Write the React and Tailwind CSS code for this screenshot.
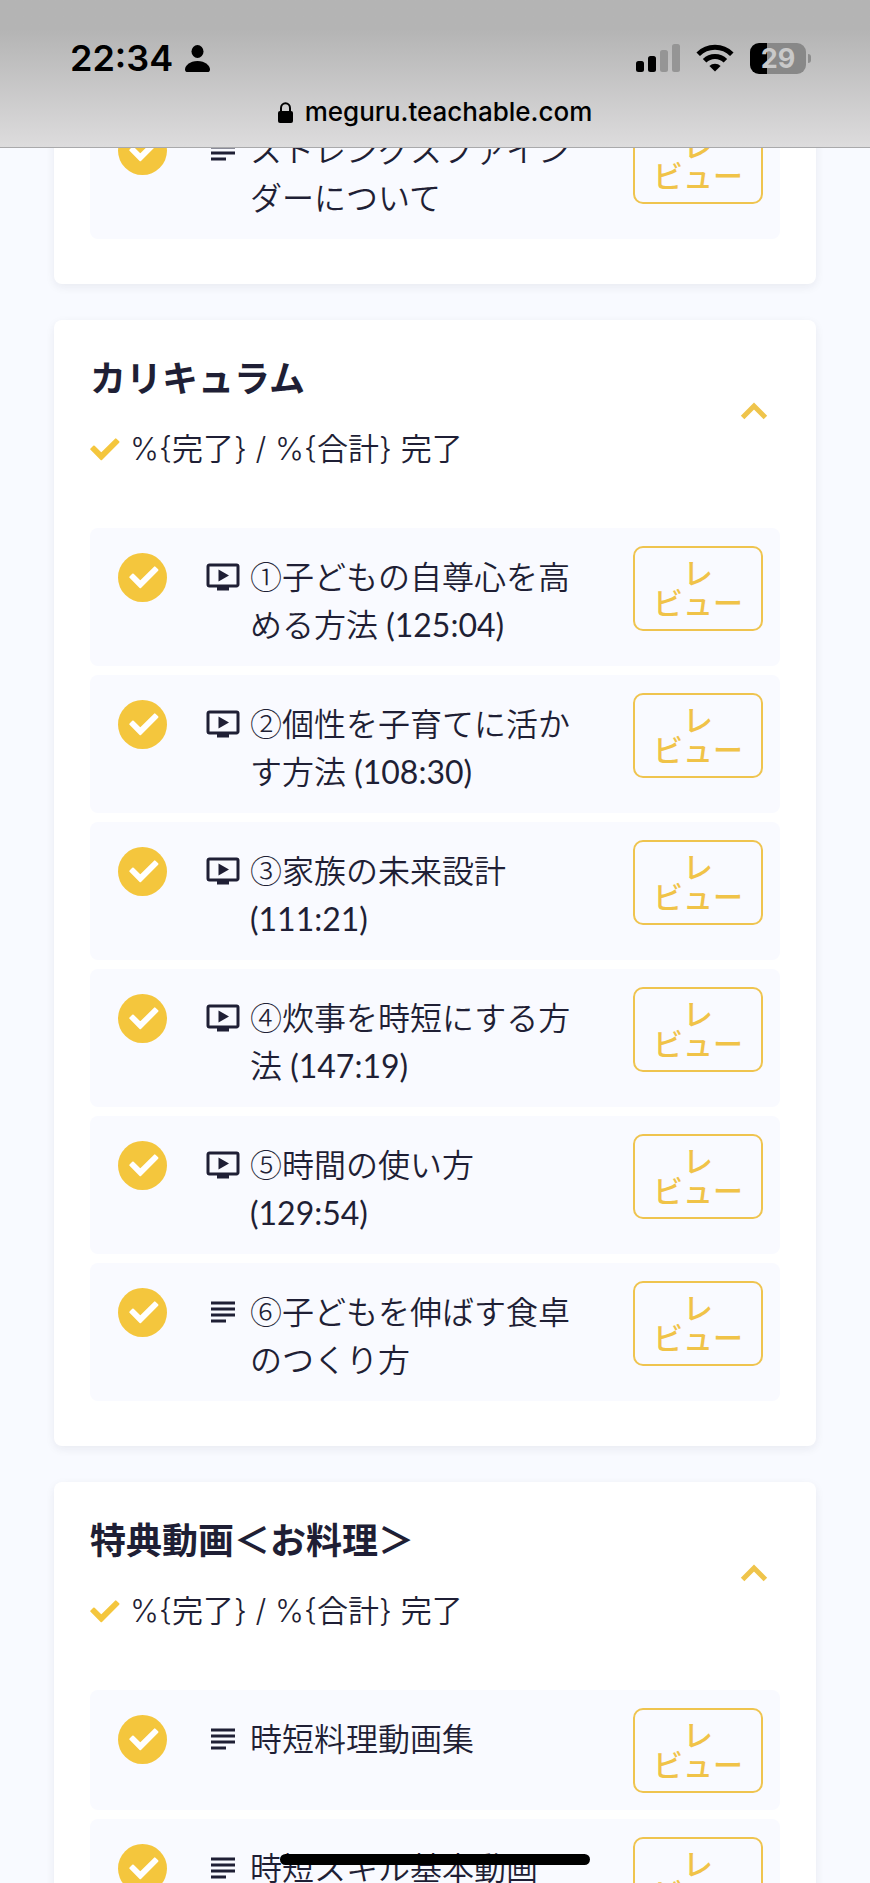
import { MdOndemandVideo, MdSubject } from "react-icons/md";

const sections = [
  {
    id: "intro",
    lessons: [{ type: "text", title: "ストレングスファインダーについて" }],
  },
  {
    id: "curriculum",
    title: "カリキュラム",
    lessons: [
      { type: "video", mark: "①", title: "子どもの自尊心を高める方法 (125:04)" },
      { type: "video", mark: "②", title: "個性を子育てに活かす方法 (108:30)" },
      { type: "video", mark: "③", title: "家族の未来設計 (111:21)" },
      { type: "video", mark: "④", title: "炊事を時短にする方法 (147:19)" },
      { type: "video", mark: "⑤", title: "時間の使い方 (129:54)" },
      { type: "text", mark: "⑥", title: "子どもを伸ばす食卓のつくり方" },
    ],
  },
  {
    id: "cooking",
    title: "特典動画＜お料理＞",
    lessons: [
      { type: "text", title: "時短料理動画集" },
      { type: "text", title: "時短スキル基本動画" },
    ],
  },
];

const CHECK = "M36.75 14.35L39.45 17.05L22.3 34.2L12.25 24.15L14.95 21.45L22.3 28.8Z";

function CheckCircle() {
  return (
    <svg className="w-[49px] h-[49px] shrink-0" viewBox="0 0 49 49" aria-label="完了">
      <circle cx="24.5" cy="24.5" r="24.5" fill="#f4c63d" />
      <path d={CHECK} fill="#fff" stroke="#fff" strokeWidth="2" strokeLinejoin="round" />
    </svg>
  );
}

function Check() {
  return (
    <svg className="w-[30px] h-[23px] shrink-0" viewBox="11 13 30 23" aria-hidden="true">
      <path d={CHECK} fill="#f4c63d" stroke="#f4c63d" strokeWidth="2" strokeLinejoin="round" />
    </svg>
  );
}

function Chevron() {
  return (
    <svg className="w-[52px] h-[52px]" viewBox="0 0 52 52" fill="none" stroke="currentColor" strokeWidth="5" aria-hidden="true">
      <path d="M14.6 31.4L26 20L37.4 31.4" />
    </svg>
  );
}

function StatusIcons() {
  return (
    <div className="flex items-center gap-4">
      <svg className="w-[44px] h-[28px]" viewBox="0 0 44 28" aria-hidden="true">
        <rect x="0" y="17" width="8" height="11" rx="2.5" />
        <rect x="12" y="12" width="8" height="16" rx="2.5" />
        <rect x="24" y="6" width="8" height="22" rx="2.5" fill="#959595" />
        <rect x="36" y="0" width="8" height="28" rx="2.5" fill="#959595" />
      </svg>
      <svg className="w-[38px] h-[28px]" viewBox="0 0 38 28" aria-hidden="true">
        <g fill="none" stroke="#000" strokeWidth="5">
          <path d="M2.2 10.3a23.8 23.8 0 0 1 33.6 0" />
          <path d="M8.6 16.7a14.7 14.7 0 0 1 20.8 0" />
        </g>
        <path d="M19 27.6l-5.6-5.6a8 8 0 0 1 11.2 0z" />
      </svg>
      <div className="flex items-center gap-[2px]">
        <div className="w-14 h-[31px] rounded-[9px] bg-linear-to-r from-black from-30% to-[#888] to-30% flex items-center justify-center text-[27px] leading-none font-bold text-[#c9c9c9]">
          29
        </div>
        <div className="w-[3px] h-[9px] rounded-r-full bg-[#8d8d8d]" />
      </div>
    </div>
  );
}

function Header() {
  return (
    <header className="fixed inset-x-0 top-0 z-10 h-[148px] pt-[34px] border-b border-[#a9a9ab] bg-linear-to-b from-[#b4b4b4] from-20% to-[#dddcdd] font-['Inter','Liberation_Sans',sans-serif] text-black">
      <div className="h-12 pl-[70px] pr-[59px] flex items-center justify-between">
        <div className="flex items-center gap-3">
          <span className="text-4xl leading-none font-semibold">22:34</span>
          <svg className="w-[25px] h-[27px]" viewBox="0 0 25 27" aria-hidden="true">
            <ellipse cx="12.5" cy="6.5" rx="6" ry="6.5" />
            <path d="M2.5 27C1 27 0 26 0 24.4 0 20.8 4.8 16 12.5 16S25 20.8 25 24.4c0 1.6-1 2.6-2.5 2.6z" />
          </svg>
        </div>
        <StatusIcons />
      </div>
      <div className="h-[60px] flex items-center justify-center gap-3">
        <svg className="w-[15px] h-[21px]" viewBox="0 0 15 21" aria-hidden="true">
          <rect x="0" y="9" width="15" height="12" rx="2" />
          <path d="M3 10V6a4.5 4.8 0 0 1 9 0v4" fill="none" stroke="#000" strokeWidth="2" />
        </svg>
        <span className="text-[26px] leading-none font-medium">meguru.teachable.com</span>
      </div>
    </header>
  );
}

function Lesson({ type, mark, title }) {
  const Icon = type === "video" ? MdOndemandVideo : MdSubject;
  return (
    <li className="flex items-start pl-7 pr-[17px] pb-[17px] rounded-lg bg-[#f9faff]">
      <div className="pt-[25px]">
        <CheckCircle />
      </div>
      <div className="flex flex-1 pt-[25px] pl-[38px] pr-12">
        <Icon className="w-9 h-12 mr-[9px] shrink-0" />
        <a href="#lesson" className="text-[32px] leading-[48px] font-['Lato','Noto_Sans_CJK_JP_DemiLight','Noto_Sans_CJK_JP',sans-serif]">
          {mark && <span className="font-['Noto_Sans_CJK_JP',sans-serif] font-light leading-none">{mark}</span>}
          {title}
        </a>
      </div>
      <button type="button" className="mt-[18px] w-[130px] h-[85px] pb-1 shrink-0 rounded-[10px] border-2 border-[#efc44f] text-[#f0c348] text-[30px] leading-[30px] font-medium cursor-pointer">
        レ<br />ビュー
      </button>
    </li>
  );
}

function Section({ title, lessons }) {
  return (
    <section className="px-9 pt-9 pb-[45px] rounded-lg bg-white shadow-[0_3px_10px_rgba(30,30,60,0.07)]">
      {title && (
        <div className="flex items-start justify-between mb-[55px]">
          <div>
            <h2 className="mb-[25px] text-4xl leading-[44px] font-bold">{title}</h2>
            <p className="flex items-center gap-[10px] text-[31px] leading-[48px] font-light font-['Inter','Noto_Sans_CJK_JP_DemiLight','Noto_Sans_CJK_JP',sans-serif]">
              <Check />
              {"%{完了} / %{合計} 完了"}
            </p>
          </div>
          <button type="button" aria-label="折りたたむ" className="mt-[30px] text-[#efc44b] cursor-pointer">
            <Chevron />
          </button>
        </div>
      )}
      <ul className="flex flex-col gap-[9px]">
        {lessons.map((lesson) => (
          <Lesson key={lesson.title} {...lesson} />
        ))}
      </ul>
    </section>
  );
}

export default function App() {
  return (
    <div className="h-screen overflow-hidden bg-[#f8faff] text-[#1f1f35] font-['Lato','Noto_Sans_CJK_JP',sans-serif]" lang="ja">
      <Header />
      <main className="flex flex-col gap-9 px-[54px] pt-[65px]">
        {sections.map((section) => (
          <Section key={section.id} {...section} />
        ))}
      </main>
      {/* home indicator */}
      <div className="fixed inset-x-0 bottom-[18px] z-10 flex justify-center">
        <div className="w-[310px] h-[11px] rounded-full bg-black" />
      </div>
    </div>
  );
}
